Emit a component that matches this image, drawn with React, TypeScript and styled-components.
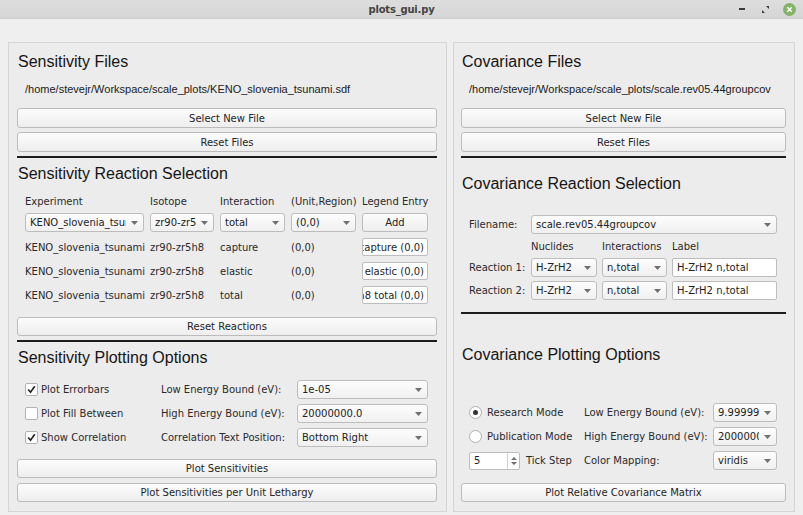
import React from "react";
import styled, { createGlobalStyle } from "styled-components";

const GlobalStyle = createGlobalStyle`
  html, body { margin: 0; padding: 0; background: #efefef; }
  body { font-family: "DejaVu Sans", sans-serif; font-size: 10px; color: #2a2a2a; }
  * { box-sizing: border-box; }
`;

const Window = styled.div`
  width: 803px;
  height: 515px;
  display: flex;
  flex-direction: column;
  background: #efefef;
  overflow: hidden;
`;

const TitleBar = styled.div`
  height: 19px;
  flex: none;
  display: grid;
  grid-template-columns: 1fr auto 1fr;
  align-items: center;
  background: linear-gradient(#dddddd, #d6d6d6);
  border-bottom: 1px solid #cfcfcf;
`;

const TitleText = styled.div`
  grid-column: 2;
  font-family: "DejaVu Sans", sans-serif;
  font-weight: bold;
  font-size: 10px;
  color: #444444;
  letter-spacing: -0.2px;
`;

const Controls = styled.div`
  grid-column: 3;
  justify-self: end;
  display: flex;
  align-items: center;
  padding-right: 7px;
`;

const CtrlSlot = styled.div<{ $w: number; $ml: number }>`
  width: ${(p) => p.$w}px;
  margin-left: ${(p) => p.$ml}px;
  height: 13px;
  display: flex;
  align-items: center;
  justify-content: center;
`;

const Body = styled.div`
  flex: 1;
  display: flex;
  gap: 6px;
  padding: 23px 8px 0 8px;
`;

const Panel = styled.section<{ $w: number; $pl: number; $pr: number }>`
  width: ${(p) => p.$w}px;
  height: 470px;
  flex: none;
  border: 1px solid #d5d5d5;
  background: #ececec;
  display: flex;
  flex-direction: column;
  padding: 0 ${(p) => p.$pr}px 0 ${(p) => p.$pl}px;
`;

const Heading = styled.h2<{ $mt: number }>`
  margin: ${(p) => p.$mt}px 0 0 1px;
  height: 20px;
  line-height: 20px;
  font-family: "Liberation Sans", Arial, sans-serif;
  font-weight: normal;
  font-size: 16px;
  color: #151515;
  white-space: nowrap;
`;

const PathText = styled.div<{ $mt: number }>`
  margin-top: ${(p) => p.$mt}px;
  padding-left: 8px;
  height: 18px;
  line-height: 18px;
  font-family: "Liberation Sans", Arial, sans-serif;
  font-size: 11px;
  color: #202020;
  white-space: nowrap;
`;

const PushButton = styled.div<{ $mt: number; $h?: number }>`
  margin-top: ${(p) => p.$mt}px;
  height: ${(p) => p.$h ?? 20}px;
  flex: none;
  border: 1px solid #bcbcbc;
  border-radius: 3px;
  background: linear-gradient(#fcfcfc, #eeeeee);
  display: flex;
  align-items: center;
  justify-content: center;
  color: #242424;
  white-space: nowrap;
`;

const Separator = styled.div<{ $mt: number }>`
  margin-top: ${(p) => p.$mt}px;
  height: 2px;
  flex: none;
  background: #1d1d1d;
`;

const ReactionGrid = styled.div`
  margin: 11px 0 0 8px;
  display: grid;
  grid-template-columns: 119px 64px 65px 65px 66px;
  grid-template-rows: 12px 19px 18px 18px 18px;
  column-gap: 6px;
  row-gap: 6px;
`;

const Cell = styled.div`
  display: flex;
  align-items: center;
  white-space: nowrap;
  color: #2a2a2a;
  min-width: 0;
`;

const ComboFrame = styled.div`
  height: 100%;
  min-width: 0;
  display: flex;
  align-items: center;
  border: 1px solid #bdbdbd;
  border-radius: 3px;
  background: linear-gradient(#fdfdfd, #f0f0f0);
  padding-left: 4px;
  color: #222;
`;

const ComboText = styled.span`
  flex: 1;
  min-width: 0;
  overflow: hidden;
  white-space: nowrap;
  line-height: 15px;
`;

const ComboArrow = styled.span`
  width: 17px;
  flex: none;
  display: flex;
  align-items: center;
  justify-content: center;
  padding-right: 1px;
`;

const LineEdit = styled.div<{ $end?: boolean }>`
  height: 100%;
  min-width: 0;
  display: flex;
  align-items: center;
  justify-content: ${(p) => (p.$end ? "flex-end" : "flex-start")};
  overflow: hidden;
  white-space: nowrap;
  border: 1px solid #bdbdbd;
  border-radius: 2px;
  background: #ffffff;
  padding: 0 3px 0 4px;
  color: #1e1e1e;
`;

const OptionsGrid = styled.div<{ $cols: string; $mt: number }>`
  margin: ${(p) => p.$mt}px 0 0 8px;
  display: grid;
  grid-template-columns: ${(p) => p.$cols};
  grid-auto-rows: 19px;
  column-gap: 6px;
  row-gap: 5px;
`;

const CovGrid = styled.div`
  margin: 21px 0 0 8px;
  display: grid;
  grid-template-columns: 57px 66px 65px 105px;
  grid-template-rows: 19px 16px 19px 19px;
  column-gap: 5px;
  row-gap: 4px;
`;

const Span3 = styled.div`
  grid-column: 2 / span 3;
  min-width: 0;
`;

const CheckRow = styled.div<{ $gap: number }>`
  display: flex;
  align-items: center;
  gap: ${(p) => p.$gap}px;
  white-space: nowrap;
  color: #2a2a2a;
`;

const CheckBox = styled.span`
  width: 13px;
  height: 13px;
  flex: none;
  border: 1px solid #b3b3b3;
  border-radius: 2px;
  background: #ffffff;
  display: flex;
  align-items: center;
  justify-content: center;
`;

const Radio = styled.span<{ $on?: boolean }>`
  width: 13px;
  height: 13px;
  flex: none;
  border: 1px solid #b0b0b0;
  border-radius: 50%;
  background: #ffffff;
  display: flex;
  align-items: center;
  justify-content: center;
  &::after {
    content: "";
    display: ${(p) => (p.$on ? "block" : "none")};
    width: 5px;
    height: 5px;
    border-radius: 50%;
    background: #333;
  }
`;

const SpinBox = styled.div`
  width: 51px;
  height: 18px;
  flex: none;
  display: flex;
  border: 1px solid #bdbdbd;
  border-radius: 2px;
  background: #ffffff;
`;

const SpinValue = styled.span`
  flex: 1;
  display: flex;
  align-items: center;
  padding-left: 4px;
  color: #1e1e1e;
`;

const SpinButtons = styled.span`
  width: 12px;
  border-left: 1px solid #d0d0d0;
  display: flex;
  align-items: center;
  justify-content: center;
`;

const Arrow = () => (
  <svg width="7" height="4" viewBox="0 0 7 4">
    <path d="M0 0 L7 0 L3.5 4 Z" fill="#707070" />
  </svg>
);

const Combo = ({ value }: { value: string }) => (
  <ComboFrame>
    <ComboText>{value}</ComboText>
    <ComboArrow>
      <Arrow />
    </ComboArrow>
  </ComboFrame>
);

const Check = ({ on, label }: { on: boolean; label: string }) => (
  <CheckRow $gap={3}>
    <CheckBox>
      {on && (
        <svg width="9" height="9" viewBox="0 0 9 9">
          <path d="M1.2 4.6 L3.5 7.3 L7.8 1.2" fill="none" stroke="#1e1e1e" strokeWidth="1.6" />
        </svg>
      )}
    </CheckBox>
    {label}
  </CheckRow>
);

const rows = [
  ["KENO_slovenia_tsunami", "zr90-zr5h8", "capture", "(0,0)"],
  ["KENO_slovenia_tsunami", "zr90-zr5h8", "elastic", "(0,0)"],
  ["KENO_slovenia_tsunami", "zr90-zr5h8", "total", "(0,0)"],
];

export default function App() {
  return (
    <>
      <GlobalStyle />
      <Window>
        <TitleBar>
          <TitleText>plots_gui.py</TitleText>
          <Controls>
            <CtrlSlot $w={8} $ml={0}>
              <svg width="6" height="2" viewBox="0 0 6 2">
                <rect width="6" height="2" fill="#3a3a3a" />
              </svg>
            </CtrlSlot>
            <CtrlSlot $w={8} $ml={15}>
              <svg width="7" height="7" viewBox="0 0 7 7">
                <path d="M4 0 H7 V3 Z M0 4 V7 H3 Z" fill="#3a3a3a" />
              </svg>
            </CtrlSlot>
            <CtrlSlot $w={13} $ml={14}>
              <svg width="13" height="13" viewBox="0 0 13 13">
                <circle cx="6.5" cy="6.5" r="6.5" fill="#82b366" />
                <path d="M4.3 4.3 L8.7 8.7 M8.7 4.3 L4.3 8.7" stroke="#ffffff" strokeWidth="1.5" />
              </svg>
            </CtrlSlot>
          </Controls>
        </TitleBar>
        <Body>
          <Panel $w={439} $pl={8} $pr={9}>
            <Heading $mt={9}>Sensitivity Files</Heading>
            <PathText $mt={8}>/home/stevejr/Workspace/scale_plots/KENO_slovenia_tsunami.sdf</PathText>
            <PushButton $mt={10}>Select New File</PushButton>
            <PushButton $mt={4}>Reset Files</PushButton>
            <Separator $mt={4} />
            <Heading $mt={6}>Sensitivity Reaction Selection</Heading>
            <ReactionGrid>
              <Cell>Experiment</Cell>
              <Cell>Isotope</Cell>
              <Cell>Interaction</Cell>
              <Cell>(Unit,Region)</Cell>
              <Cell>Legend Entry</Cell>
              <Combo value="KENO_slovenia_tsunami" />
              <Combo value="zr90-zr5h8" />
              <Combo value="total" />
              <Combo value="(0,0)" />
              <PushButton $mt={0} $h={19}>Add</PushButton>
              {rows.map((r, i) => (
                <React.Fragment key={i}>
                  <Cell>{r[0]}</Cell>
                  <Cell>{r[1]}</Cell>
                  <Cell>{r[2]}</Cell>
                  <Cell>{r[3]}</Cell>
                  <LineEdit $end>
                    <span>{`${r[0]} ${r[1]} ${r[2]} ${r[3]}`}</span>
                  </LineEdit>
                </React.Fragment>
              ))}
            </ReactionGrid>
            <PushButton $mt={13} $h={19}>Reset Reactions</PushButton>
            <Separator $mt={4} />
            <Heading $mt={6}>Sensitivity Plotting Options</Heading>
            <OptionsGrid $cols="130px 130px 131px" $mt={12}>
              <Check on label="Plot Errorbars" />
              <Cell>Low Energy Bound (eV):</Cell>
              <Combo value="1e-05" />
              <Check on={false} label="Plot Fill Between" />
              <Cell>High Energy Bound (eV):</Cell>
              <Combo value="20000000.0" />
              <Check on label="Show Correlation" />
              <Cell>Correlation Text Position:</Cell>
              <Combo value="Bottom Right" />
            </OptionsGrid>
            <PushButton $mt={12} $h={19}>Plot Sensitivities</PushButton>
            <PushButton $mt={5} $h={19}>Plot Sensitivities per Unit Lethargy</PushButton>
          </Panel>

          <Panel $w={342} $pl={7} $pr={8}>
            <Heading $mt={9}>Covariance Files</Heading>
            <PathText $mt={8}>/home/stevejr/Workspace/scale_plots/scale.rev05.44groupcov</PathText>
            <PushButton $mt={10}>Select New File</PushButton>
            <PushButton $mt={4}>Reset Files</PushButton>
            <Separator $mt={4} />
            <Heading $mt={16}>Covariance Reaction Selection</Heading>
            <CovGrid>
              <Cell>Filename:</Cell>
              <Span3>
                <Combo value="scale.rev05.44groupcov" />
              </Span3>
              <Cell />
              <Cell>Nuclides</Cell>
              <Cell>Interactions</Cell>
              <Cell>Label</Cell>
              <Cell>Reaction 1:</Cell>
              <Combo value="H-ZrH2" />
              <Combo value="n,total" />
              <LineEdit>H-ZrH2 n,total</LineEdit>
              <Cell>Reaction 2:</Cell>
              <Combo value="H-ZrH2" />
              <Combo value="n,total" />
              <LineEdit>H-ZrH2 n,total</LineEdit>
            </CovGrid>
            <Separator $mt={12} />
            <Heading $mt={31}>Covariance Plotting Options</Heading>
            <OptionsGrid $cols="109px 123px 64px" $mt={38}>
              <CheckRow $gap={5}>
                <Radio $on />
                Research Mode
              </CheckRow>
              <Cell>Low Energy Bound (eV):</Cell>
              <Combo value="9.999999e-06" />
              <CheckRow $gap={5}>
                <Radio />
                Publication Mode
              </CheckRow>
              <Cell>High Energy Bound (eV):</Cell>
              <Combo value="20000000.0" />
              <CheckRow $gap={6}>
                <SpinBox>
                  <SpinValue>5</SpinValue>
                  <SpinButtons>
                    <svg width="6" height="10" viewBox="0 0 6 10">
                      <path d="M0 4 L3 1 L6 4 Z M0 6 L3 9 L6 6 Z" fill="#707070" />
                    </svg>
                  </SpinButtons>
                </SpinBox>
                Tick Step
              </CheckRow>
              <Cell>Color Mapping:</Cell>
              <Combo value="viridis" />
            </OptionsGrid>
            <PushButton $mt={13} $h={19}>Plot Relative Covariance Matrix</PushButton>
          </Panel>
        </Body>
      </Window>
    </>
  );
}
